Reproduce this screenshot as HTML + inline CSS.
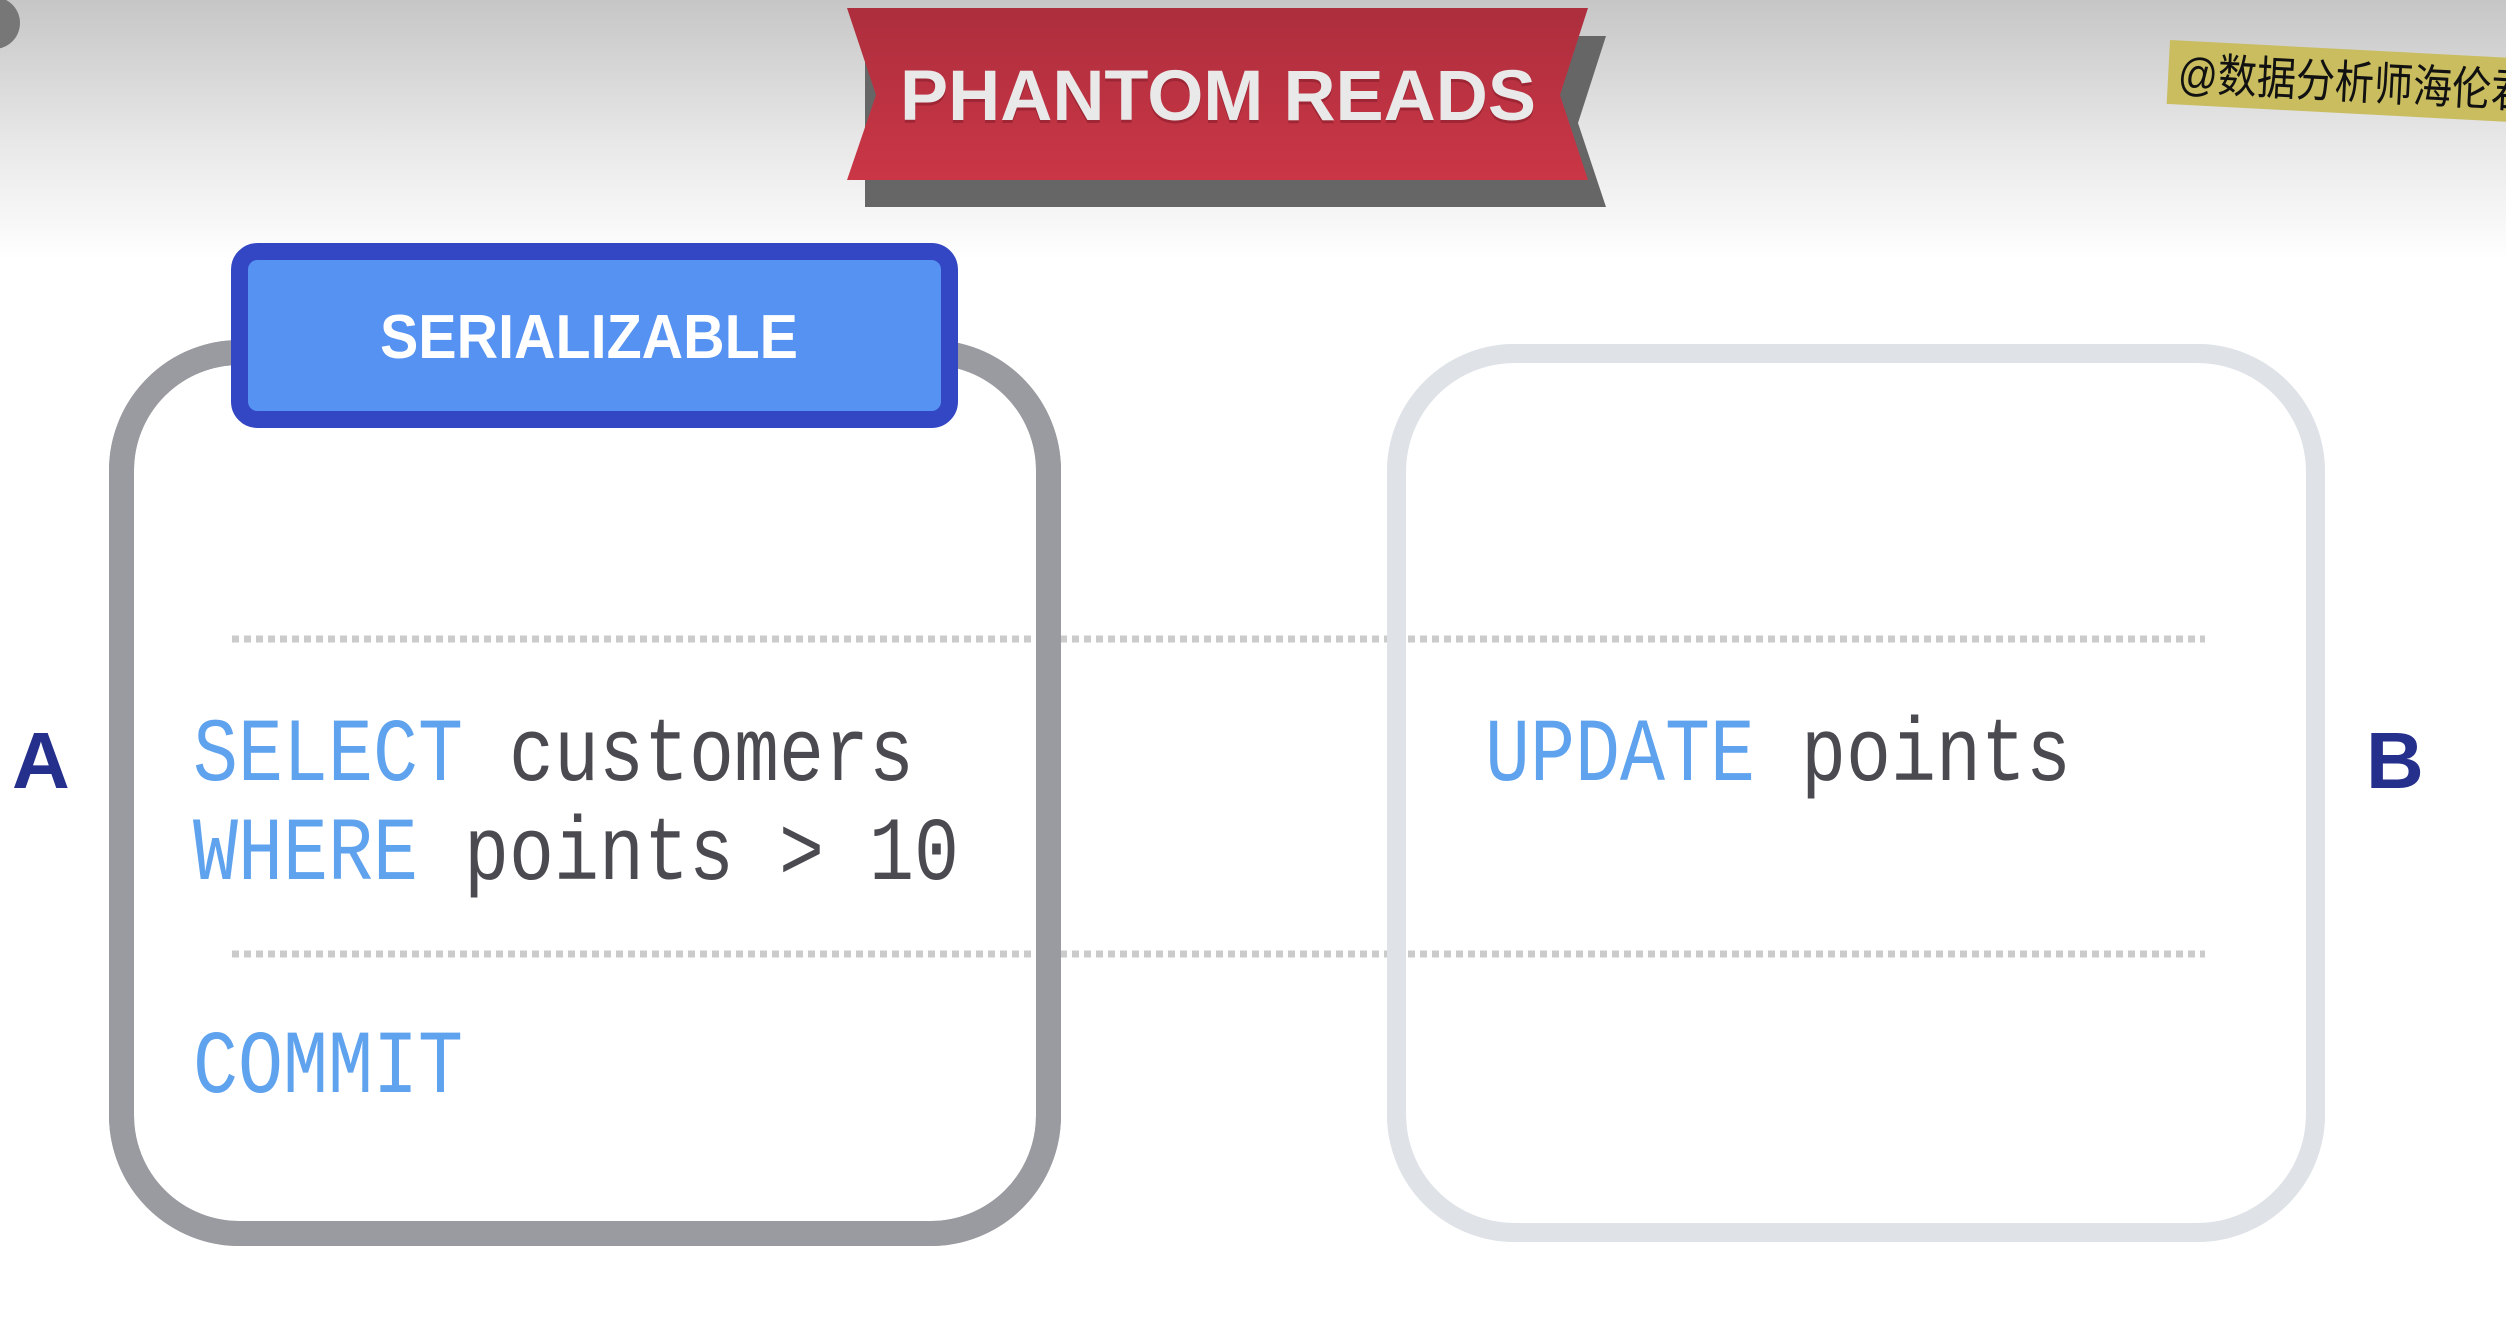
<!DOCTYPE html>
<html><head><meta charset="utf-8"><style>
html,body{margin:0;padding:0;background:#fff;}
svg{display:block}
</style></head><body>
<svg width="2506" height="1322" viewBox="0 0 2506 1322" xmlns="http://www.w3.org/2000/svg">
<defs>
<linearGradient id="bg" x1="0" y1="0" x2="0" y2="1">
<stop offset="0" stop-color="#c6c6c6"/><stop offset="0.55" stop-color="#e8e8e8"/><stop offset="1" stop-color="#ffffff"/>
</linearGradient>
<linearGradient id="red" x1="0" y1="0" x2="0" y2="1">
<stop offset="0" stop-color="#ad2e3d"/><stop offset="1" stop-color="#ca3646"/>
</linearGradient>
</defs>
<rect width="2506" height="1322" fill="#fff"/>
<rect width="2506" height="260" fill="url(#bg)"/>
<circle cx="-6" cy="23" r="26" fill="#777"/>
<polygon points="865,36 1606,36 1578,123 1606,207 865,207" fill="#666"/>
<polygon points="847,8 1588,8 1560,95 1588,180 847,180 876,95" fill="url(#red)"/>
<text x="1218" y="123" text-anchor="middle" font-family="Liberation Sans, sans-serif" font-weight="700" font-size="71" fill="#8a1f2c" textLength="636" lengthAdjust="spacingAndGlyphs" opacity="0.6">PHANTOM READS</text>
<text x="1218" y="120" text-anchor="middle" font-family="Liberation Sans, sans-serif" font-weight="700" font-size="71" fill="#e9e9e9" textLength="636" lengthAdjust="spacingAndGlyphs">PHANTOM READS</text>
<g transform="rotate(3 2170 40)">
<rect x="2170" y="40" width="400" height="64" fill="#c9bd5f"/>
<g transform="translate(2180 89) scale(0.85 1)">
<text x="0" y="0" font-family="Liberation Sans, 'Noto Sans CJK SC', sans-serif" font-size="46" fill="#111">@数据分析师海伦君</text>
</g>
</g>
<rect x="121.5" y="352.5" width="927" height="881" rx="118" fill="#fff" stroke="#999ba0" stroke-width="25"/>
<rect x="1396.5" y="353.5" width="919" height="879" rx="118" fill="#fff" stroke="#dfe3e8" stroke-width="19"/>
<line x1="232" y1="639" x2="2205" y2="639" stroke="#cbcbcb" stroke-width="7" stroke-dasharray="7 5"/>
<line x1="232" y1="954" x2="2205" y2="954" stroke="#cbcbcb" stroke-width="7" stroke-dasharray="7 5"/>
<rect x="121.5" y="352.5" width="927" height="881" rx="118" fill="none" stroke="#999ba0" stroke-width="25"/>
<rect x="1396.5" y="353.5" width="919" height="879" rx="118" fill="none" stroke="#dfe3e8" stroke-width="19"/>
<rect x="239.5" y="251.5" width="710" height="168" rx="18" fill="#5592f2" stroke="#3347c4" stroke-width="17"/>
<text x="589" y="358" text-anchor="middle" font-family="Liberation Sans, sans-serif" font-weight="700" font-size="62" fill="#fff" textLength="418" lengthAdjust="spacingAndGlyphs">SERIALIZABLE</text>
<g font-family="Liberation Mono, monospace" font-size="75">
<g transform="translate(193 780) scale(1 1.2)"><text fill="#5fa2ee">SELECT</text><text x="316" fill="#4a4a50">customers</text></g>
<g transform="translate(193 879) scale(1 1.2)"><text fill="#5fa2ee">WHERE</text><text x="271" fill="#4a4a50">points &gt; 10</text></g>
<g transform="translate(193 1092) scale(1 1.2)"><text fill="#5fa2ee">COMMIT</text></g>
<g transform="translate(1485 780) scale(1 1.2)"><text fill="#5fa2ee">UPDATE</text><text x="316" fill="#4a4a50">points</text></g>
</g>
<text x="12" y="788" font-family="Liberation Sans, sans-serif" font-weight="700" font-size="80" fill="#252f8c">A</text>
<text x="2366" y="788" font-family="Liberation Sans, sans-serif" font-weight="700" font-size="80" fill="#252f8c">B</text>
</svg>
</body></html>
